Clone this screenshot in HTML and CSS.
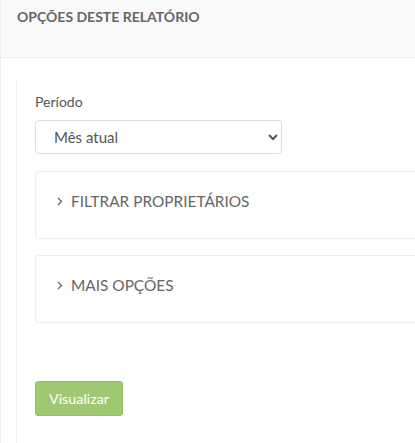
FILE: index.html
```html
<!DOCTYPE html>
<html>
<head>
	<title>Opções deste relatório</title>
	<meta charset="UTF-8">
	<link rel="stylesheet" href="styles.css">
</head>
<body>
	<div class="report-box">
		<div class="report-header">
			<h2 class="report-title">Opções deste relatório</h2>
		</div>
		<div class="report-body">
			<div class="report-form">
				<label class="field-label" for="periodo">Período</label>
				<select class="field-select" id="periodo">
					<option>Mês atual</option>
					<option>Mês anterior</option>
					<option>Ano atual</option>
				</select>

				<div class="collapse-panel">
					<svg class="collapse-arrow" width="6" height="9" viewBox="0 0 6 9"><path d="M1 1l3.5 3.5L1 8" fill="none" stroke="#666" stroke-width="1.3"/></svg>
					Filtrar proprietários
				</div>
				<div class="collapse-panel">
					<svg class="collapse-arrow" width="6" height="9" viewBox="0 0 6 9"><path d="M1 1l3.5 3.5L1 8" fill="none" stroke="#666" stroke-width="1.3"/></svg>
					Mais opções
				</div>

				<button class="btn-view" type="button">Visualizar</button>
			</div>
		</div>
	</div>
</body>
</html>
```

FILE: styles.css
```css
body {
	margin: 0;
	background-color: #fff;
	font-family: Lato, "Open Sans", sans-serif;
	color: #666;
}

.report-box {
	border-left: 1px solid #eceef3;
	min-height: 443px;
}

.report-header {
	height: 58px;
	background-color: #f9f9f9;
	border-bottom: 1px solid #eceef3;
	padding: 8px 16px 0;
	box-sizing: border-box;
}

.report-title {
	margin: 0;
	font-size: 14px;
	font-weight: bold;
	text-transform: uppercase;
	color: #666;
}

.report-body {
	padding: 21px 0 0 15px;
}

.report-form {
	border-left: 1px solid #f1f1f4;
	padding: 14px 0 30px 18px;
}

.field-label {
	display: block;
	font-size: 14px;
	color: #555;
	margin-bottom: 10px;
}

.field-select {
	display: block;
	width: 247px;
	height: 34px;
	padding: 0 14px;
	font-family: Lato, sans-serif;
	font-size: 15px;
	color: #555;
	background-color: #fff;
	border: 1px solid #ddd;
	border-radius: 4px;
}

.collapse-panel {
	margin-top: 16px;
	height: 68px;
	border: 1px solid #eceef3;
	border-right: none;
	border-radius: 4px 0 0 4px;
	padding: 20px 0 0 21px;
	display: flex;
	align-items: center;
	align-self: flex-start;
	font-size: 15.4px;
	line-height: 19px;
	text-transform: uppercase;
	color: #666;
	box-sizing: border-box;
}

.field-select + .collapse-panel {
	margin-top: 17px;
}

.collapse-panel {
	align-items: flex-start;
}

.collapse-arrow {
	margin: 5px 8px 0 0;
}

.btn-view {
	margin-top: 58px;
	height: 35px;
	padding: 0 13px;
	font-family: Lato, sans-serif;
	font-size: 14.3px;
	color: #fff;
	background-color: #a0c872;
	border: 1px solid #94c062;
	border-radius: 3px;
}
```
